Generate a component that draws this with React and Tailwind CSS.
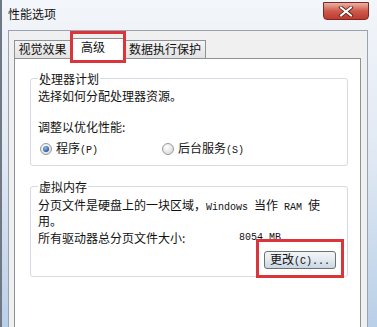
import React from "react";

const Latin = ({ children }) => (
  <span className="font-['Liberation_Mono',monospace] text-[10px]">{children}</span>
);

function Radio({ checked }) {
  return (
    <svg width="12" height="12" viewBox="0 0 12 12" className="shrink-0">
      <defs>
        <radialGradient id={checked ? "rg1" : "rg0"} cx="40%" cy="35%" r="70%">
          <stop offset="0" stopColor="#ffffff" />
          <stop offset="1" stopColor="#d8d8d8" />
        </radialGradient>
        <radialGradient id="dot" cx="40%" cy="35%" r="70%">
          <stop offset="0" stopColor="#8ec0f0" />
          <stop offset="1" stopColor="#1b4f8c" />
        </radialGradient>
      </defs>
      <circle cx="6" cy="6" r="5.5" fill={`url(#${checked ? "rg1" : "rg0"})`} stroke="#9a9a9a" />
      {checked && <circle cx="6" cy="6" r="3" fill="url(#dot)" />}
    </svg>
  );
}

function GroupBox({ label, children, className = "" }) {
  return (
    <div className={"rounded-[3px] border border-[#d5dbe2] pl-[7px] pr-[11px] " + className}>
      <div className="-mt-[7px] w-fit bg-white px-px leading-[13px]">{label}</div>
      {children}
    </div>
  );
}

export default function App() {
  return (
    <div className="w-[377px] h-[327px] overflow-hidden flex flex-col border-l-2 border-[#6f7884] bg-gradient-to-b from-[#f3f6fa] via-[#dfe8f3] to-[#b9cfe8] text-[12px] text-[#111] font-['Noto_Sans_CJK_SC','Noto_Sans',sans-serif]">
      {/* title bar */}
      <div className="h-[30px] shrink-0 flex justify-between pl-[6px] pr-[8px]">
        <div className="pt-[7px] leading-[14px]">性能选项</div>
        <div className="mt-[2px] w-[46px] h-[18px] rounded-b-[4px] border border-[#7a2a22] bg-gradient-to-b from-[#eab0a2] via-[#cc5a4c] to-[#c0392e] flex items-center justify-center">
          <svg width="16" height="11" viewBox="0 0 16 11">
            <path d="M3 1.5 L13 9.5 M13 1.5 L3 9.5" stroke="#5b1d16" strokeWidth="3.6" strokeLinecap="square" />
            <path d="M3 1.5 L13 9.5 M13 1.5 L3 9.5" stroke="#ffffff" strokeWidth="2" strokeLinecap="square" />
          </svg>
        </div>
      </div>

      {/* client area */}
      <div className="flex-1 ml-[6px] mr-[9px] border-l border-t border-r border-[#98a2b0] bg-[#f0f0f0] pl-[5px] pr-[6px] pt-[7px] flex flex-col">
        {/* tabs */}
        <div className="flex items-end h-[20px] shrink-0">
          <div className="w-[57px] h-[18px] border border-b-0 border-[#8d9299] bg-gradient-to-b from-[#f4f4f4] to-[#e2e2e2] text-center leading-[16px]">
            视觉效果
          </div>
          <div className="relative w-[54px] h-[21px] -mb-px border border-b-0 border-[#8d9299] bg-white pl-[9px] leading-[16px] z-10">
            高级
            <div className="absolute -left-[2px] -right-[2px] -top-[8px] -bottom-[4px] border-[3px] border-[#d9353a]" />
          </div>
          <div className="w-[81px] h-[18px] border border-b-0 border-l-0 border-[#8d9299] bg-gradient-to-b from-[#f4f4f4] to-[#e2e2e2] text-center leading-[16px]">
            数据执行保护
          </div>
        </div>

        {/* tab panel */}
        <div className="flex-1 border border-b-0 border-[#8d9299] bg-white pl-[15px] pr-[12px] pt-[19px]">
          <GroupBox label="处理器计划" className="h-[88px]">
            <div className="mt-[4px] leading-[13px]">选择如何分配处理器资源。</div>
            <div className="mt-[18px] leading-[13px]">调整以优化性能:</div>
            <div className="mt-[8px] flex items-center leading-[13px]">
              <div className="flex items-center gap-[4px] w-[124px] pl-[2px]">
                <Radio checked />
                <span>程序<Latin>(P)</Latin></span>
              </div>
              <div className="flex items-center gap-[4px]">
                <Radio />
                <span>后台服务<Latin>(S)</Latin></span>
              </div>
            </div>
          </GroupBox>

          <GroupBox label="虚拟内存" className="mt-[20px] h-[91px]">
            <div className="mt-[5px] leading-[13px] whitespace-nowrap">
              分页文件是硬盘上的一块区域，<Latin>Windows </Latin>当作<Latin> RAM </Latin>使
            </div>
            <div className="leading-[13px]">用。</div>
            <div className="mt-[4px] flex leading-[13px]">
              <span className="w-[201px]">所有驱动器总分页文件大小:</span>
              <Latin>8054 MB</Latin>
            </div>
            <div className="mt-[6px] flex justify-end">
              <div className="relative">
                <button className="w-[72px] h-[18px] rounded-[3px] border border-[#707070] bg-gradient-to-b from-[#f2f5f8] via-[#e2e9f0] to-[#c9d6e2] text-left pl-[5px] leading-[14px]">
                  更改<Latin>(C)...</Latin>
                </button>
                <div className="absolute -left-[8px] -right-[8px] -top-[11px] -bottom-[9px] border-[3px] border-[#d9353a]" />
              </div>
            </div>
          </GroupBox>
        </div>
      </div>
    </div>
  );
}
